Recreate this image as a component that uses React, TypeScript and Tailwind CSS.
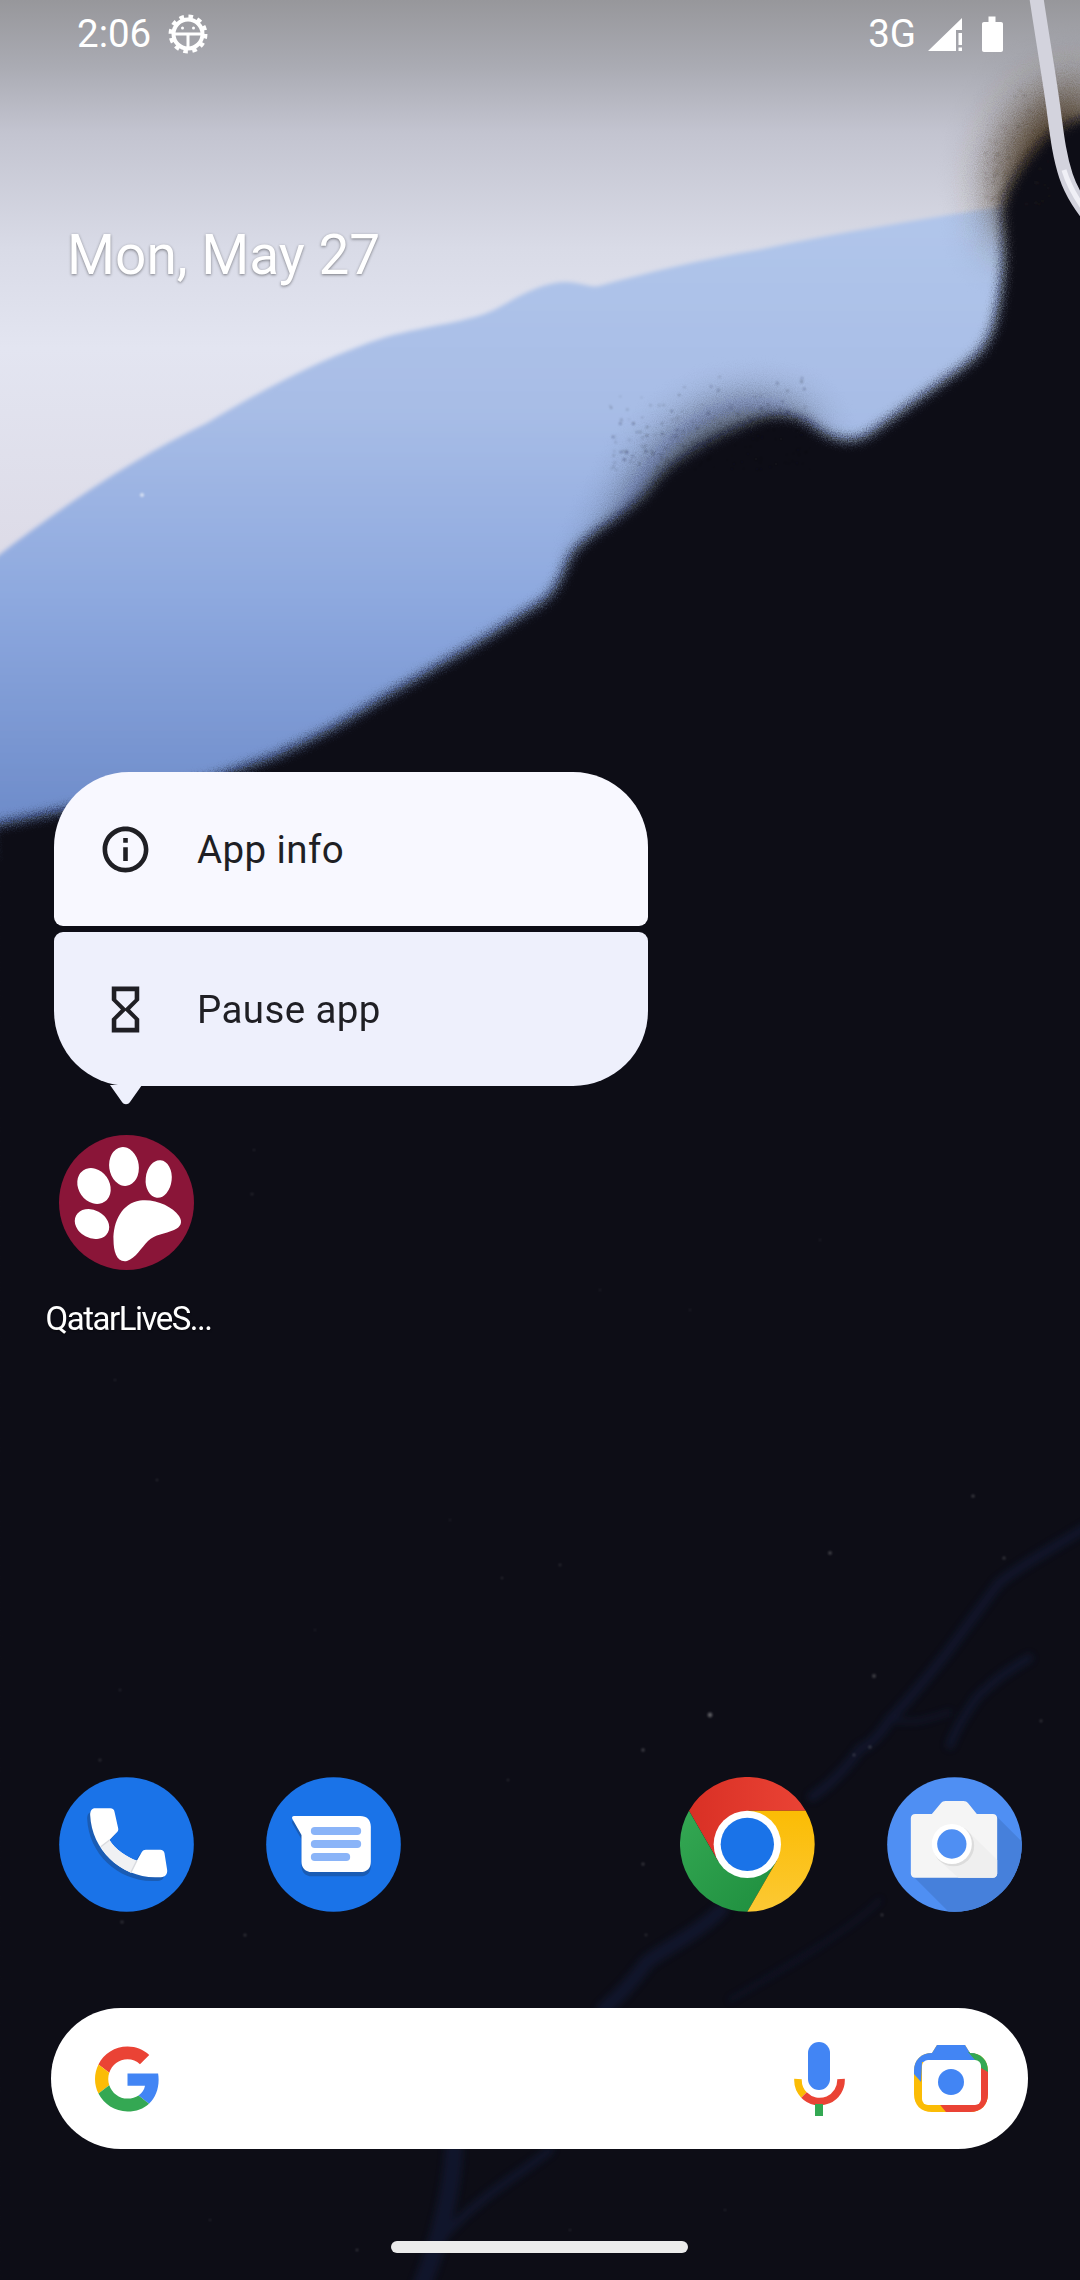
import React from 'react';

const stars = [
  [710, 1715, 2.4, 0.32], [830, 1553, 1.8, 0.24], [973, 1496, 1.6, 0.22], [1004, 1558, 1.6, 0.18], [874, 1676, 1.9, 0.22],
  [870, 1747, 1.6, 0.2], [854, 1755, 1.4, 0.18], [643, 1750, 1.7, 0.22], [1041, 1721, 1.4, 0.16],
  [882, 1915, 1.4, 0.18], [643, 1864, 1.5, 0.2], [560, 1565, 1.4, 0.12], [502, 1578, 1.3, 0.12],
  [508, 1780, 1.3, 0.12], [252, 1194, 1.6, 0.1], [254, 1150, 1.2, 0.1], [157, 1480, 1.3, 0.12], [115, 1380, 1.2, 0.1],
  [120, 1690, 1.3, 0.1], [100, 1760, 1.6, 0.12], [122, 1922, 1.6, 0.16], [245, 1935, 1.5, 0.16], [646, 1935, 1.4, 0.12],
  [315, 1630, 1.2, 0.08], [450, 1520, 1.2, 0.08], [600, 1290, 1.2, 0.08], [690, 1310, 1.2, 0.08], [820, 1240, 1.2, 0.08],
  [210, 2220, 1.2, 0.1], [725, 2210, 1.2, 0.1], [570, 2230, 1.2, 0.1], [357, 2250, 1.3, 0.18],
  [142, 495, 2, 0.6],
];

// small dark specks for the sprayed edge of the wallpaper
const makeSpecks = (count: number, x0: number, x1: number, y0: number, y1: number, seed: number) => {
  let s = seed;
  const next = () => {
    s = (s * 16807) % 2147483647;
    return s / 2147483647;
  };
  return Array.from({ length: count }, () => {
    const x = x0 + next() * (x1 - x0);
    // denser towards the lower end
    const y = y0 + Math.sqrt(next()) * (y1 - y0);
    return { x, y, r: 0.8 + next() * 0.8, o: 0.12 + next() * 0.22 };
  });
};

const blueSpecks = makeSpecks(190, 610, 810, 370, 470, 77);
const brownSpecks = makeSpecks(70, 985, 1050, 80, 210, 1234);

// wallpaper: light sky, blue band, dark field with a grainy edge
const Wallpaper = () => (
  <svg className="absolute inset-0" width="1080" height="2280" viewBox="0 0 1080 2280">
    <defs>
      <linearGradient id="sky" x1="0" y1="0" x2="0" y2="1">
        <stop offset="0" stopColor="#97979b" />
        <stop offset="0.08" stopColor="#aaabb3" />
        <stop offset="0.16" stopColor="#c3c4d0" />
        <stop offset="0.3" stopColor="#d9dbe7" />
        <stop offset="0.42" stopColor="#e3e5f1" />
        <stop offset="0.7" stopColor="#dcdae6" />
        <stop offset="1" stopColor="#d8d6e2" />
      </linearGradient>
      <linearGradient id="band" x1="0" y1="230" x2="0" y2="820" gradientUnits="userSpaceOnUse">
        <stop offset="0" stopColor="#b0c5ea" />
        <stop offset="0.3" stopColor="#a8bde6" />
        <stop offset="0.62" stopColor="#8ea9df" />
        <stop offset="1" stopColor="#6e8cca" />
      </linearGradient>
      <filter id="soft" x="-5%" y="-5%" width="110%" height="110%">
        <feGaussianBlur stdDeviation="2" />
      </filter>
      <filter id="grain" x="-5%" y="-5%" width="110%" height="110%">
        <feGaussianBlur stdDeviation="6" result="b" />
        <feTurbulence type="fractalNoise" baseFrequency="0.8" numOctaves="2" seed="4" result="n" />
        <feDisplacementMap in="b" in2="n" scale="10" xChannelSelector="R" yChannelSelector="G" />
      </filter>
      <filter id="haze" x="-150%" y="-150%" width="400%" height="400%">
        <feGaussianBlur stdDeviation="24" result="b" />
        <feTurbulence type="fractalNoise" baseFrequency="0.9" numOctaves="2" seed="9" result="n" />
        <feDisplacementMap in="b" in2="n" scale="22" xChannelSelector="R" yChannelSelector="G" />
      </filter>
      <filter id="vein" x="-10%" y="-10%" width="120%" height="120%">
        <feGaussianBlur stdDeviation="3.5" />
      </filter>
      <filter id="dot" x="-10%" y="-10%" width="120%" height="120%">
        <feGaussianBlur stdDeviation="0.8" />
      </filter>
    </defs>

    <rect width="1080" height="830" fill="url(#sky)" />
    <path
      filter="url(#soft)"
      d="M-10 562C70 500 140 455 207 423C270 385 330 355 386 337C430 325 470 322 496 309C520 295 545 282 565 282C580 282 590 288 599 286C650 272 700 260 758 250C840 232 920 220 1010 205V480L600 860H-10Z"
      fill="url(#band)"
    />
    {/* brown halo at the top right */}
    <path filter="url(#haze)" d="M1000 205C985 165 1010 120 1040 95L1100 80V240H1000Z" fill="#4b3b28" />
    {/* dark haze over the blue */}
    <path filter="url(#haze)" d="M800 420C740 395 690 420 650 475C630 510 610 550 595 585L640 615L810 465Z" fill="#0f0f19" opacity="0.8" />
    <path
      filter="url(#grain)"
      d="M1100 112C1075 120 1055 128 1045 138C1025 160 1002 190 1002 215C1005 245 1004 290 993 327C985 350 975 356 964 366L872 432C855 444 835 442 813 426C795 412 770 412 745 425C700 445 665 465 650 490C620 520 590 530 570 556C560 580 555 590 544 600L482 640L379 700C340 725 310 740 275 756L207 780L-10 826V2300H1100Z"
      fill="#0f0f19"
    />
    <g fill="#14141e" filter="url(#dot)">
      {blueSpecks.map((d, i) => (
        <circle key={i} cx={d.x} cy={d.y} r={d.r} opacity={d.o} />
      ))}
    </g>
    <g fill="#3a3026" filter="url(#dot)">
      {brownSpecks.map((d, i) => (
        <circle key={i} cx={d.x} cy={d.y} r={d.r} opacity={d.o} />
      ))}
    </g>

    {/* white ribbon */}
    <path d="M1036 -5C1042 35 1048 70 1053 105C1057 135 1059 155 1066 176C1072 194 1082 208 1095 224" fill="none" stroke="#d3d3dd" strokeWidth="14" />
    <path d="M1064 170C1070 190 1080 205 1093 221" fill="none" stroke="#f0f0f6" strokeWidth="5" />

    {/* veins at the bottom */}
    <g filter="url(#vein)" fill="none" stroke="#18204a" strokeLinecap="round" opacity="0.42">
      <path d="M1085 1528C1050 1550 1020 1565 998 1584C975 1615 960 1635 946 1654C925 1680 905 1705 890 1719C880 1735 870 1745 860 1749C845 1770 830 1785 812 1797" strokeWidth="9" />
      <path d="M721 1910C695 1935 670 1945 647 1962C630 1985 615 2000 604 2009" strokeWidth="14" />
      <path d="M1029 1658C1000 1675 990 1685 977 1697C965 1715 955 1730 950 1745" strokeWidth="8" />
      <path d="M890 1719C915 1725 925 1720 950 1712" strokeWidth="4" />
      <path d="M590 2020C570 2040 560 2050 530 2070" strokeWidth="5" />
      <path d="M880 1900C850 1930 790 1965 730 2000" strokeWidth="3" />
      <path d="M454 2150C452 2190 440 2240 422 2285" strokeWidth="18" />
      <path d="M550 2150C520 2175 480 2195 440 2240C432 2255 430 2270 428 2285" strokeWidth="8" />
    </g>
    <g filter="url(#dot)">
      {stars.map(([x, y, r, o]) => (
        <circle key={`${x}-${y}`} cx={x} cy={y} r={r} fill="#ffffff" opacity={o} />
      ))}
    </g>
  </svg>
);

const AdbIcon = () => (
  <svg width="40" height="40" viewBox="0 0 40 40" className="ml-[17px]">
    <circle cx="20" cy="20" r="14.5" fill="none" stroke="#fff" strokeWidth="4" />
    <circle cx="20" cy="20" r="17.2" fill="none" stroke="#fff" strokeWidth="4.5" strokeDasharray="4.5 4.5" />
    <rect x="7" y="18.5" width="26" height="3" fill="#fff" />
    <rect x="18.5" y="20" width="3" height="13" fill="#fff" />
    <circle cx="14.5" cy="14" r="1.5" fill="#fff" />
    <circle cx="25.5" cy="14" r="1.5" fill="#fff" />
  </svg>
);

const SignalIcon = () => (
  <svg width="34" height="33" viewBox="928 18 34 33" className="ml-[12px]">
    <path d="M928 51L962 18V30H956V51Z" fill="#fff" />
    <rect x="958.5" y="33" width="3.5" height="12" fill="#fff" />
    <rect x="958.5" y="47.5" width="3.5" height="3.5" fill="#fff" />
  </svg>
);

const BatteryIcon = () => (
  <svg width="21" height="36" viewBox="0 0 21 36" className="ml-[20px]">
    <path d="M6.5 0.5H13.5V6H19C20.2 6 21 6.8 21 8V34C21 35.2 20.2 36 19 36H2C0.8 36 0 35.2 0 34V8C0 6.8 0.8 6 2 6H6.5Z" fill="#fff" />
  </svg>
);

const StatusBar = () => (
  <div className="relative flex h-[68px] items-center justify-between pl-[77px] pr-[77px] text-white">
    <div className="flex items-center">
      <span className="text-[38.5px] leading-none">2:06</span>
      <AdbIcon />
    </div>
    <div className="flex items-center">
      <span className="text-[38.5px] leading-none">3G</span>
      <SignalIcon />
      <BatteryIcon />
    </div>
  </div>
);

const InfoIcon = () => (
  <svg width="55" height="55" viewBox="0 0 24 24" fill="#1f1f24">
    <path d="M11 7h2v2h-2zm0 4h2v6h-2zm1-9C6.48 2 2 6.48 2 12s4.48 10 10 10 10-4.48 10-10S17.52 2 12 2zm0 18c-4.41 0-8-3.59-8-8s3.59-8 8-8 8 3.59 8 8-3.59 8-8 8z" />
  </svg>
);

const HourglassIcon = () => (
  <svg width="55" height="55" viewBox="0 0 24 24" fill="#1f1f24">
    <path d="M6 2v6h.01L6 8.01 10 12l-4 4 .01.01H6V22h12v-5.99h-.01L18 16l-4-4 4-3.99-.01-.01H18V2H6zm10 14.5V20H8v-3.5l4-4 4 4zm-4-5l-4-4V4h8v3.5l-4 4z" />
  </svg>
);

const ShortcutMenu = () => (
  <div className="absolute left-[54px] top-[772px] w-[594px] text-[#1f1f24]">
    <div className="flex h-[154px] items-center rounded-t-[75px] rounded-b-[9px] bg-[#f8f8ff] pl-[44px]">
      <InfoIcon />
      <span className="ml-[44px] translate-y-px text-[38.5px] tracking-[0.4px]">App info</span>
    </div>
    <div className="mt-[6px] flex h-[154px] items-center rounded-t-[9px] rounded-b-[75px] bg-[#eef0fc] pl-[44px]">
      <HourglassIcon />
      <span className="ml-[44px] translate-y-px text-[38.5px] tracking-[0.4px]">Pause app</span>
    </div>
    <svg width="36" height="20" viewBox="0 0 36 20" className="absolute left-[54px] top-[313px]">
      <path d="M2 0H34L22 17C20 20 16 20 14 17Z" fill="#eef0fc" />
    </svg>
  </div>
);

const PawIcon = () => (
  <svg width="135" height="135" viewBox="59 1135 135 135">
    <circle cx="126.5" cy="1202.5" r="67.5" fill="#8a1538" />
    <g fill="#fff">
      <ellipse cx="124" cy="1166.5" rx="14.8" ry="19.5" transform="rotate(-8 124 1166.5)" />
      <ellipse cx="158.7" cy="1179" rx="13" ry="18.8" transform="rotate(6 158.7 1179)" />
      <ellipse cx="94" cy="1186" rx="15.5" ry="19" transform="rotate(-35 94 1186)" />
      <ellipse cx="92" cy="1224" rx="18" ry="14" transform="rotate(28 92 1224)" />
      <path d="M113.5 1240C113 1222 122 1203 140 1200.5C155 1198.5 172 1206 179 1216C183 1222 181 1227 174 1230C165 1234 155 1234 148 1241C141 1248 136 1258 127 1261C117 1263 113.5 1252 113.5 1240Z" />
    </g>
  </svg>
);

const PhoneIcon = () => {
  const handset =
    'M195 175H240C248 175 252 180 253 185L264 235C265 240 264 243 261 246L238 270C255 298 290 322 320 332L335 306C338 301 342 299 347 299H390C397 299 402 303 403 310L411 360C412 372 406 381 392 382L375 382C270 380 185 300 180 195C180 183 185 175 195 175Z';
  return (
    <svg width="135" height="135" viewBox="87 81 404 405">
      <circle cx="289" cy="283.5" r="202" fill="#1a73e8" />
      <path d={handset} fill="#1a5cb4" transform="translate(-9 11)" />
      <path d={handset} fill="#fff" />
      <path d="M212 290L238 270C255 298 290 322 320 332L302 368C265 352 232 325 212 290Z" fill="#f0f1f3" />
      <path d="M212 290L238 270M302 368L320 332" stroke="#d9dbdf" strokeWidth="4" />
    </svg>
  );
};

const MessagesIcon = () => {
  const bubble = 'M792 198H990C1010 198 1022 210 1022 230V335C1022 355 1010 366 990 366H845C826 366 814 354 814 335V255L787 208C784 202 786 198 792 198Z';
  return (
    <svg width="135" height="135" viewBox="708 81 404 405">
      <circle cx="910" cy="283.5" r="202" fill="#1a73e8" />
      <path d={bubble} fill="#1a5cb4" transform="translate(0 13)" />
      <path d={bubble} fill="#fff" />
      <rect x="842" y="231" width="151" height="24" rx="12" fill="#8ab4f8" />
      <rect x="842" y="270" width="151" height="24" rx="12" fill="#8ab4f8" />
      <rect x="842" y="309" width="118" height="24" rx="12" fill="#8ab4f8" />
    </svg>
  );
};

const ChromeIcon = () => (
  <svg width="135" height="135" viewBox="60 81 405 405">
    <defs>
      <linearGradient id="cr" x1="0" y1="0" x2="1" y2="0">
        <stop offset="0" stopColor="#d93025" />
        <stop offset="1" stopColor="#ea4335" />
      </linearGradient>
      <linearGradient id="cg" x1="1" y1="1" x2="0" y2="0">
        <stop offset="0" stopColor="#1e8e3e" />
        <stop offset="1" stopColor="#34a853" />
      </linearGradient>
      <linearGradient id="cy" x1="0" y1="0" x2="0" y2="1">
        <stop offset="0" stopColor="#fbbc04" />
        <stop offset="1" stopColor="#fcc934" />
      </linearGradient>
    </defs>
    <path d="M437 182A202 202 0 0 0 87 182L174.5 333.5L262 182Z" fill="url(#cr)" />
    <path d="M87 182A202 202 0 0 0 262 485L349.5 333.5H174.5Z" fill="url(#cg)" />
    <path d="M262 485A202 202 0 0 0 437 182H262L349.5 333.5Z" fill="url(#cy)" />
    <circle cx="262" cy="283" r="101" fill="#fff" />
    <circle cx="262" cy="283" r="80" fill="#1a73e8" />
  </svg>
);

const CameraIcon = () => (
  <svg width="135" height="135" viewBox="681 81 404 405">
    <defs>
      <clipPath id="camc">
        <circle cx="883" cy="283.5" r="202" />
      </clipPath>
    </defs>
    <circle cx="883" cy="283.5" r="202" fill="#4f8ff3" />
    <path d="M752 372L870 490H1100V290L1005 195Z" fill="#4680db" clipPath="url(#camc)" />
    <path d="M752 204C752 197 758 192 765 192H815L842 160C846 155 850 153 856 153H910C916 153 920 155 924 160L950 192H998C1005 192 1011 197 1011 204V371C1011 378 1005 383 998 383H765C758 383 752 378 752 371Z" fill="#f5f5f5" />
    <path d="M930 250L1011 330V371C1011 378 1005 383 998 383H895L830 325Z" fill="#efefef" />
    <circle cx="880" cy="287" r="62" fill="#000" opacity="0.08" />
    <circle cx="875" cy="282" r="60" fill="#fff" />
    <circle cx="875" cy="282" r="44" fill="#4f8ff3" />
  </svg>
);

const GoogleG = () => (
  <svg width="65" height="66" viewBox="0 0 48 48">
    <path fill="#EA4335" d="M24 9.5c3.54 0 6.71 1.22 9.21 3.6l6.85-6.85C35.9 2.38 30.47 0 24 0 14.62 0 6.51 5.38 2.56 13.22l7.98 6.19C12.43 13.72 17.74 9.5 24 9.5z" />
    <path fill="#4285F4" d="M46.98 24.55c0-1.57-.15-3.09-.38-4.55H24v9.02h12.94c-.58 2.96-2.26 5.48-4.78 7.18l7.73 6c4.51-4.18 7.09-10.36 7.09-17.65z" />
    <path fill="#FBBC05" d="M10.53 28.59c-.48-1.45-.76-2.99-.76-4.59s.27-3.14.76-4.59l-7.98-6.19C.92 16.46 0 20.12 0 24c0 3.88.92 7.54 2.56 10.78l7.97-6.19z" />
    <path fill="#34A853" d="M24 48c6.48 0 11.93-2.13 15.89-5.81l-7.73-6c-2.15 1.45-4.92 2.3-8.16 2.3-6.26 0-11.57-4.22-13.47-9.91l-7.98 6.19C6.51 42.62 14.62 48 24 48z" />
  </svg>
);

const MicIcon = () => (
  <svg width="51" height="74" viewBox="794 2042 51 74">
    <rect x="808" y="2042" width="22" height="48" rx="11" fill="#4285f4" />
    <path d="M798 2079A21.5 21.5 0 0 0 804 2095" fill="none" stroke="#fbbc05" strokeWidth="7.6" />
    <path d="M804 2095A21.5 21.5 0 0 0 841 2079" fill="none" stroke="#ea4335" strokeWidth="7.6" />
    <rect x="815" y="2104" width="8" height="12" fill="#34a853" />
  </svg>
);

const LensIcon = () => (
  <svg width="74" height="67" viewBox="914 2045 74 67">
    <defs>
      <clipPath id="lensc">
        <path d="M914 2071C914 2060 921 2053 932 2053L937 2045H965L970 2053C981 2053 988 2060 988 2071V2094C988 2105 981 2112 970 2112H932C921 2112 914 2105 914 2094Z" />
      </clipPath>
    </defs>
    <g clipPath="url(#lensc)">
      <rect x="914" y="2045" width="74" height="67" fill="#fbbc05" />
      <path d="M914 2045H975V2062H922L921 2082L914 2074Z" fill="#4285f4" />
      <path d="M968 2052H988V2073L981 2072L975 2060Z" fill="#34a853" />
      <path d="M981 2068L988 2072V2112H946L936 2100H981Z" fill="#ea4335" />
    </g>
    <rect x="922" y="2060" width="59" height="45" rx="6" fill="#fff" />
    <circle cx="951" cy="2082" r="13" fill="#4285f4" />
  </svg>
);

export default function App() {
  return (
    <div className="relative flex h-[2280px] w-[1080px] flex-col overflow-hidden bg-[#0f0f19] font-['Roboto',sans-serif]">
      <Wallpaper />
      <StatusBar />

      <div className="relative ml-[67px] mt-[156px] text-[55px] leading-[62px] text-white [text-shadow:0_1px_3px_rgba(0,0,0,0.45)]">
        Mon, May 27
      </div>

      <div className="relative ml-[59px] mt-[849px] flex w-[135px] flex-col items-center">
        <PawIcon />
        <span className="mt-[29px] translate-x-[2px] whitespace-nowrap text-[33px] leading-[40px] tracking-[-1.5px] text-white [text-shadow:0_1px_2px_rgba(0,0,0,0.5)]">
          QatarLiveS...
        </span>
      </div>

      <div className="relative ml-[59px] mt-[438px] flex gap-[72px]">
        <PhoneIcon />
        <MessagesIcon />
        <div className="w-[135px]" />
        <ChromeIcon />
        <CameraIcon />
      </div>

      <div className="relative ml-[51px] mt-[96px] flex h-[141px] w-[977px] items-center rounded-[70px] bg-white pl-[44px]">
        <GoogleG />
        <div className="ml-auto flex items-center pr-[40px]">
          <MicIcon />
          <div className="ml-[69px]">
            <LensIcon />
          </div>
        </div>
      </div>

      <div className="relative ml-[391px] mt-[92px] h-[12px] w-[297px] rounded-full bg-[#ebebeb]" />

      <ShortcutMenu />
    </div>
  );
}
